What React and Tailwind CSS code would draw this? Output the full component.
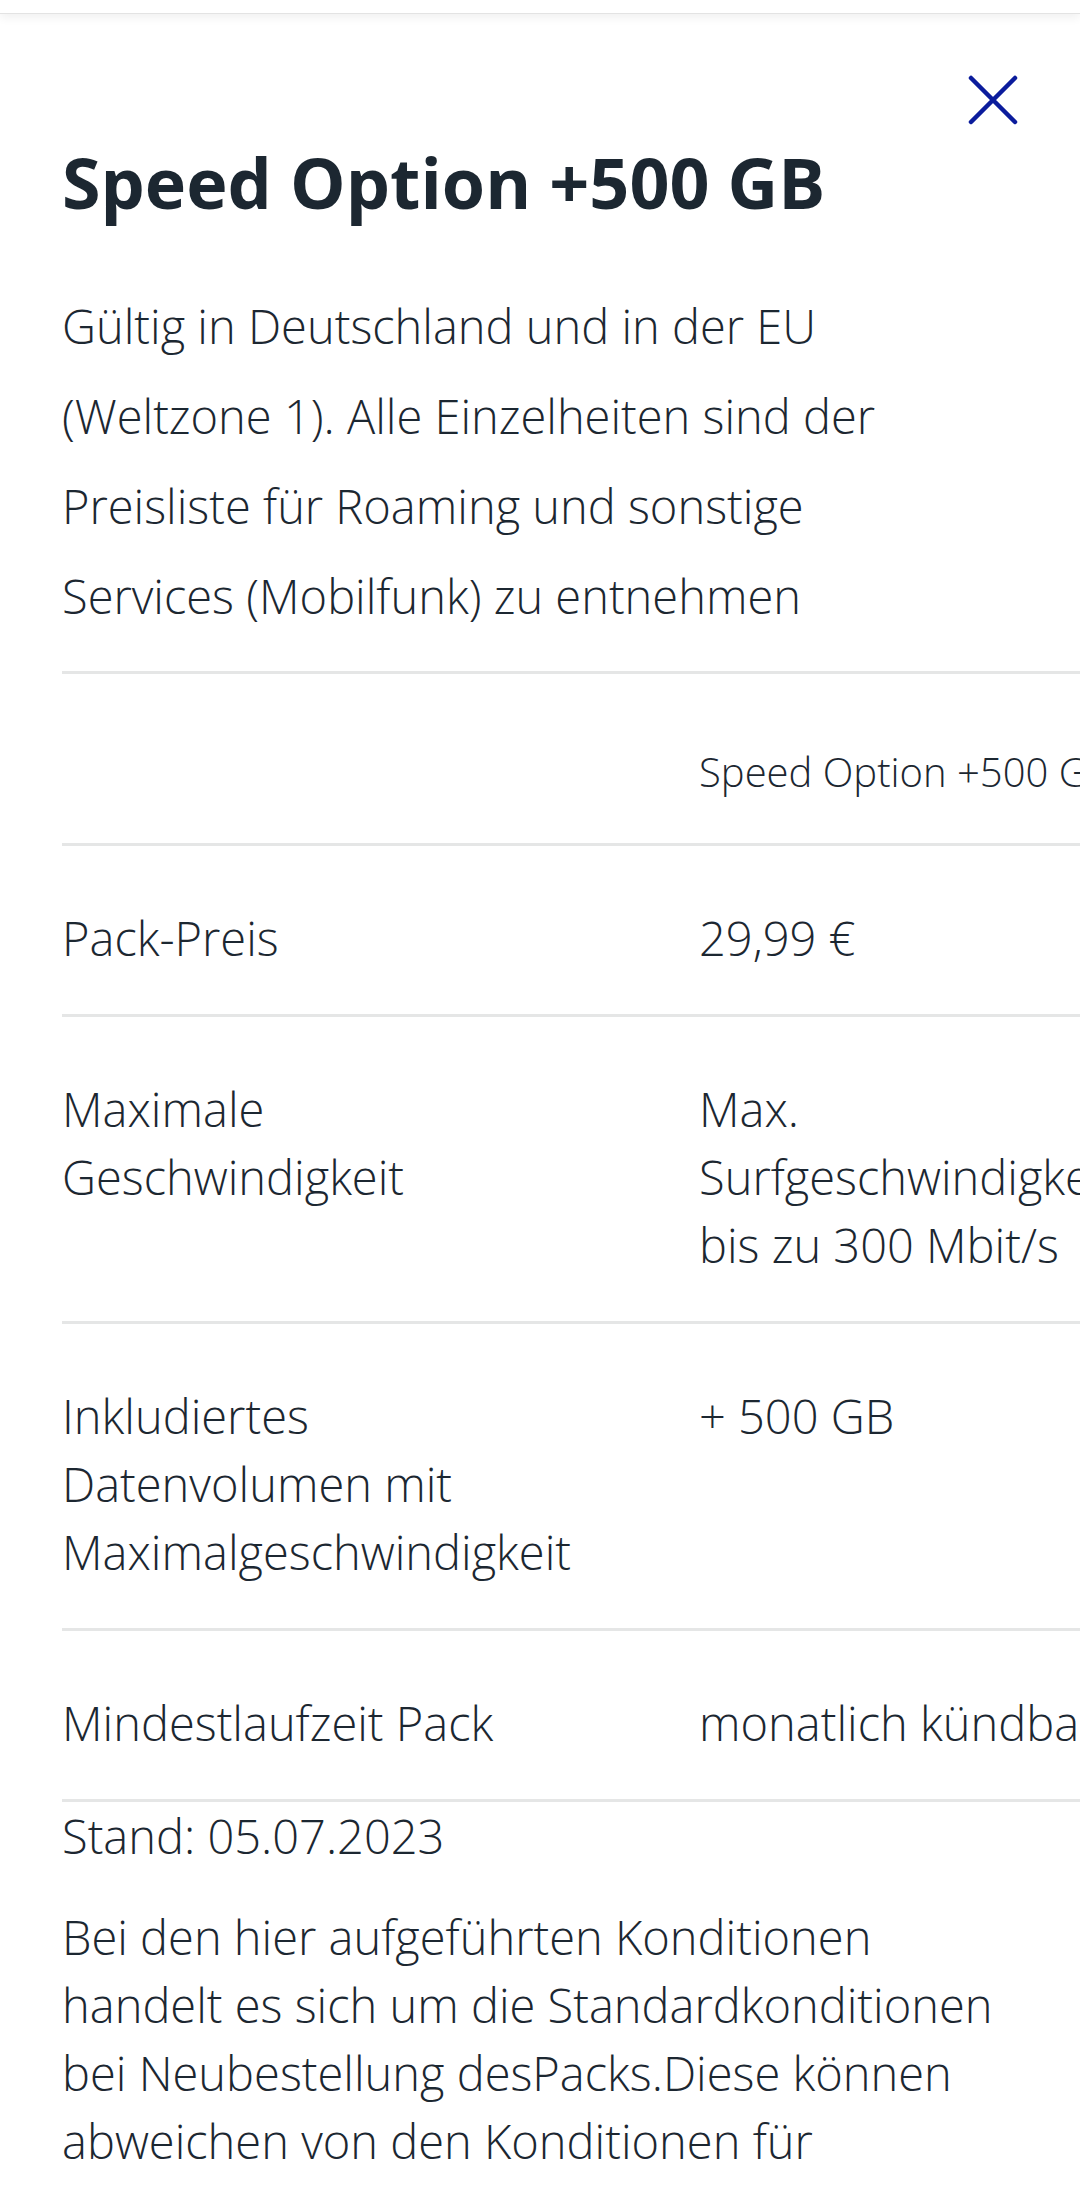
import React from "react";

const rows = [
  { label: ["Pack-Preis"], value: ["29,99 €"] },
  {
    label: ["Maximale", "Geschwindigkeit"],
    value: ["Max.", "Surfgeschwindigkeit", "bis zu 300 Mbit/s"],
  },
  {
    label: ["Inkludiertes", "Datenvolumen mit", "Maximalgeschwindigkeit"],
    value: ["+ 500 GB"],
  },
  { label: ["Mindestlaufzeit Pack"], value: ["monatlich kündbar"] },
];

const Lines = ({ lines }) =>
  lines.map((line, i) => (
    <React.Fragment key={i}>
      {i > 0 && <br />}
      {line}
    </React.Fragment>
  ));

const CloseIcon = () => (
  <svg width="50" height="50" viewBox="0 0 50 50" fill="none">
    <path
      d="M3 3 L47 47 M47 3 L3 47"
      stroke="#0b1c9c"
      strokeWidth="4.5"
      strokeLinecap="round"
    />
  </svg>
);

export default function App() {
  return (
    <div
      className="relative h-[2189px] w-[1080px] overflow-hidden bg-white text-[#1c2731]"
      style={{ fontFamily: '"Open Sans", "Noto Sans", sans-serif' }}
    >
      {/* top edge with shadow */}
      <div className="h-[14px] border-b border-[#e3e3e3] bg-white shadow-[0_4px_10px_rgba(0,0,0,0.06)]" />

      <div className="pl-[62px]">
        {/* close */}
        <div className="flex justify-end pr-[62px] pt-[60px]">
          <button type="button" className="flex h-[51px] w-[50px] items-center justify-center">
            <CloseIcon />
          </button>
        </div>

        {/* title */}
        <h1 className="mt-[17px] whitespace-nowrap text-[70px] font-bold leading-[80px]">
          Speed Option +500 GB
        </h1>

        {/* intro */}
        <p className="mt-[59px] whitespace-nowrap text-[47px] font-light leading-[90px]">
          Gültig in Deutschland und in der EU
          <br />
          (Weltzone 1). Alle Einzelheiten sind der
          <br />
          Preisliste für Roaming und sonstige
          <br />
          Services (Mobilfunk) zu entnehmen
        </p>

        {/* table */}
        <div className="mt-[30px] w-[1160px] border-t-[3px] border-[#e5e6e6]">
          <div className="grid grid-cols-[637px_523px] border-b-[3px] border-[#e5e6e6]">
            <div />
            <div className="whitespace-nowrap pb-[46px] pt-[73px] text-[40px] font-light leading-[50px]">
              Speed Option +500 GB
            </div>
          </div>

          {rows.map((row) => (
            <div
              key={row.label.join(" ")}
              className="grid grid-cols-[637px_523px] whitespace-nowrap border-b-[3px] border-[#e5e6e6] text-[47px] font-light leading-[68px]"
            >
              <div className="pb-[42px] pt-[58px]">
                <Lines lines={row.label} />
              </div>
              <div className="pb-[42px] pt-[58px]">
                <Lines lines={row.value} />
              </div>
            </div>
          ))}
        </div>

        {/* footnote */}
        <div className="whitespace-nowrap text-[47px] font-light leading-[68px]">
          <p>Stand: 05.07.2023</p>
          <p className="mt-[33px]">
            Bei den hier aufgeführten Konditionen
            <br />
            handelt es sich um die Standardkonditionen
            <br />
            bei Neubestellung desPacks.Diese können
            <br />
            abweichen von den Konditionen für
          </p>
        </div>
      </div>
    </div>
  );
}
